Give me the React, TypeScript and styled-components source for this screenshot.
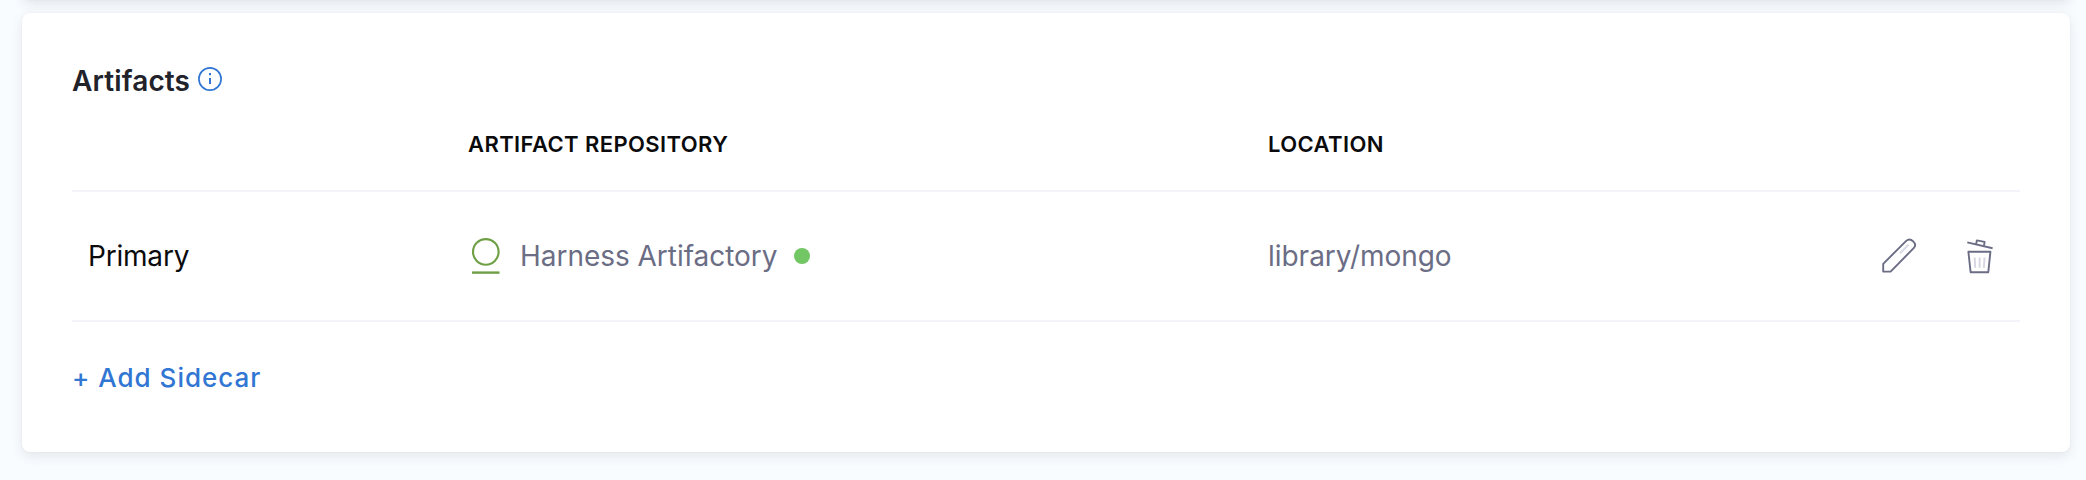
import React from "react";
import styled, { createGlobalStyle } from "styled-components";

const GlobalStyle = createGlobalStyle`
  * { box-sizing: border-box; }
  body {
    margin: 0;
    background: #f8fcff;
    font-family: Inter, "Liberation Sans", sans-serif;
    overflow: hidden;
  }
`;

const cardShadow = "0 0 2px rgba(40, 41, 61, 0.06), 0 4px 12px rgba(80, 85, 90, 0.12)";

const Page = styled.main`
  height: 480px;
  overflow: hidden;
  padding: 0 16px 0 22px;
  display: flex;
  flex-direction: column;
  gap: 13px;
`;

const PreviousCard = styled.section`
  flex: none;
  height: 40px;
  margin-top: -40px;
  border-radius: 8px;
  background: #fff;
  box-shadow: ${cardShadow};
`;

const Card = styled.section`
  flex: none;
  height: 439px;
  padding: 51px 50px 50px;
  border-radius: 8px;
  background: #fff;
  box-shadow: ${cardShadow};
`;

const Title = styled.h2`
  display: flex;
  align-items: center;
  gap: 8px;
  height: 34px;
  margin: 0;
  font-size: 28px;
  font-weight: 600;
  line-height: 34px;
  letter-spacing: 0.12px;
  color: #22222a;
  svg { margin-top: -4px; }
`;

const Row = styled.div<{ $height: number }>`
  display: grid;
  grid-template-columns: 396px 800px 1fr auto;
  align-items: center;
  height: ${(p) => p.$height}px;
  border-bottom: 2px solid #f3f3fa;
`;

const ColumnName = styled.span<{ $column: number }>`
  grid-column: ${(p) => p.$column};
  font-size: 22px;
  font-weight: 600;
  line-height: 28px;
  letter-spacing: 0.4px;
  color: #0b0b0d;
`;

const Cell = styled.div<{ $tone?: string }>`
  display: flex;
  align-items: center;
  font-size: 28px;
  line-height: 34px;
  letter-spacing: -0.03px;
  color: ${(p) => p.$tone ?? "#6b6d85"};
`;

const NameCell = styled(Cell)`
  padding-left: 16px;
  letter-spacing: -0.2px;
`;

const RepositoryName = styled.span`
  margin: 0 16px 0 18px;
`;

const StatusDot = styled.span`
  width: 16px;
  height: 16px;
  border-radius: 50%;
  background: #72c664;
`;

const Actions = styled.div`
  display: flex;
  gap: 49px;
  padding-right: 26px;
`;

const IconButton = styled.button`
  display: flex;
  padding: 0;
  border: 0;
  background: none;
`;

const AddButton = styled.button`
  display: block;
  margin-top: 39px;
  padding: 0;
  border: 0;
  background: none;
  font: 500 26px/34px Inter, "Liberation Sans", sans-serif;
  letter-spacing: 1px;
  color: #3176d3;
`;

const InfoIcon = () => (
  <svg width="24" height="24" viewBox="0 0 24 24" fill="none" stroke="#3176d3">
    <circle cx="12" cy="12" r="11.1" strokeWidth="1.7" />
    <path d="M12 11v6M12 6v2.2" strokeWidth="2" />
  </svg>
);

const ArtifactoryIcon = () => (
  <svg width="34" height="38" viewBox="0 0 34 38" fill="none" stroke="#6f9f45">
    <circle cx="17.8" cy="14.9" r="12.8" strokeWidth="2.1" />
    <path d="M4 35.6h27.5" strokeWidth="2.4" />
  </svg>
);

const PencilIcon = () => (
  <svg width="36" height="36" viewBox="0 0 36 36" fill="none">
    <path
      d="M2.2 33.6V25.8L25.2 2.9Q28.6-.1 32.2 3.4T32.9 9.9L9.6 33.6Z"
      stroke="#6b6d85"
      strokeWidth="1.9"
      strokeLinejoin="round"
    />
    <path d="M19 15.2l8.6-8.6" stroke="#d9dae6" strokeWidth="2" />
  </svg>
);

const TrashIcon = () => (
  <svg width="28" height="36" viewBox="0 0 28 36" fill="none">
    <g stroke="#6b6d85" strokeWidth="1.9" strokeLinejoin="round">
      <path d="M1.3 4.4l25.3 5.9" />
      <path d="M10.1 6.1l.8-3.7 7.7 1.5-.6 3.7" />
      <path d="M2.4 13.8h22l-2.1 20.4H4.6Z" />
    </g>
    <path d="M8.7 19.5l.5 10.3M13.6 19.5v10.3M18.5 19.5l-.6 10.3" stroke="#d5d6e1" strokeWidth="1.9" />
  </svg>
);

export default function App() {
  return (
    <>
      <GlobalStyle />
      <Page>
        <PreviousCard />
        <Card>
          <Title>
            Artifacts
            <InfoIcon />
          </Title>
          <Row $height={94}>
            <ColumnName $column={2}>ARTIFACT REPOSITORY</ColumnName>
            <ColumnName $column={3}>LOCATION</ColumnName>
          </Row>
          <Row $height={130}>
            <NameCell $tone="#0b0b0d">Primary</NameCell>
            <Cell>
              <ArtifactoryIcon />
              <RepositoryName>Harness Artifactory</RepositoryName>
              <StatusDot />
            </Cell>
            <Cell>library/mongo</Cell>
            <Actions>
              <IconButton aria-label="Edit">
                <PencilIcon />
              </IconButton>
              <IconButton aria-label="Delete">
                <TrashIcon />
              </IconButton>
            </Actions>
          </Row>
          <AddButton>+ Add Sidecar</AddButton>
        </Card>
      </Page>
    </>
  );
}
